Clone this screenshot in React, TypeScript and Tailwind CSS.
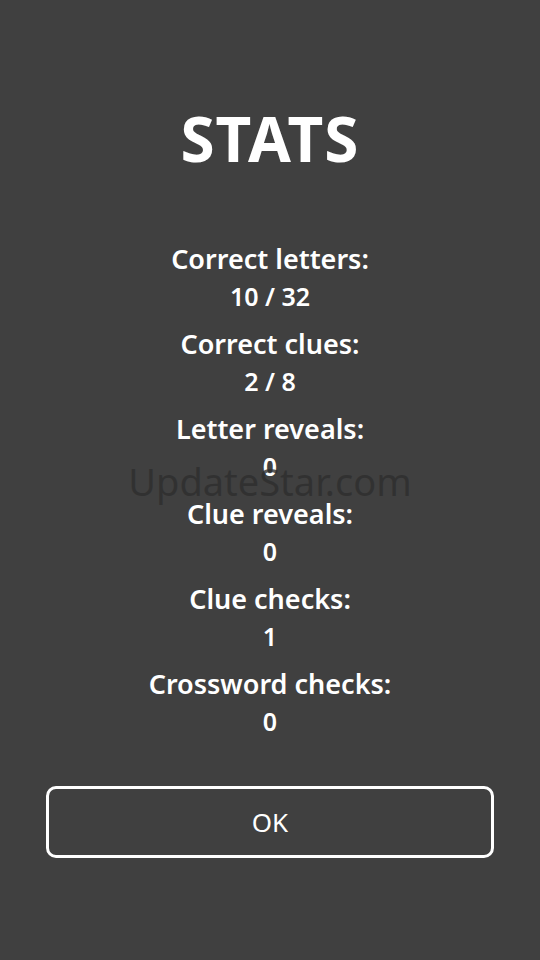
import React from 'react';

interface Stat {
  label: string;
  value: string;
}

const stats: Stat[] = [
  { label: 'Correct letters:', value: '10 / 32' },
  { label: 'Correct clues:', value: '2 / 8' },
  { label: 'Letter reveals:', value: '0' },
  { label: 'Clue reveals:', value: '0' },
  { label: 'Clue checks:', value: '1' },
  { label: 'Crossword checks:', value: '0' },
];

const App: React.FC = () => {
  return (
    <div
      className="relative w-[540px] h-[960px] bg-[#404040] text-white flex flex-col items-center overflow-hidden"
      style={{ fontFamily: '"Noto Sans", "Open Sans", sans-serif' }}
    >
      {/* Title */}
      <h1 className="mt-[94px] text-[62px] leading-[88px] font-bold tracking-[1px]">STATS</h1>

      {/* Stats list */}
      <div className="mt-[59px] flex flex-col items-center">
        {stats.map((s) => (
          <div key={s.label} className="flex flex-col items-center h-[85px]">
            <div className="text-[27px] leading-[36px] font-semibold">{s.label}</div>
            <div className="text-[25px] leading-[38px] font-semibold">{s.value}</div>
          </div>
        ))}
      </div>

      {/* OK button */}
      <button className="mt-[35px] w-[448px] h-[72px] rounded-[10px] border-[3px] border-white text-[26px] font-normal">
        OK
      </button>

      {/* Watermark */}
      <div className="absolute left-0 right-0 top-[456px] text-center text-[38px] leading-[50px] text-[#2e2e2e]/80 pointer-events-none">
        UpdateStar.com
      </div>
    </div>
  );
};

export default App;
